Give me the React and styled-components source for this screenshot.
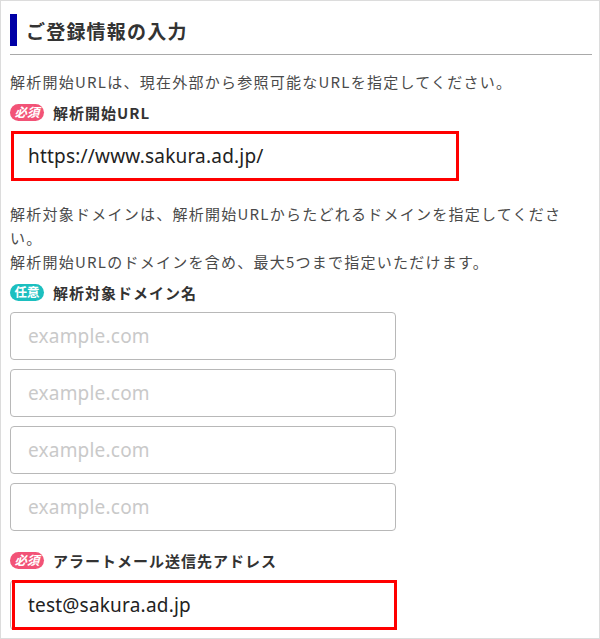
import React from 'react';
import styled, { createGlobalStyle } from 'styled-components';

const GlobalStyle = createGlobalStyle`
  body {
    margin: 0;
    background: #fff;
    font-family: "Noto Sans CJK JP", "Noto Sans", sans-serif;
  }
`

const Frame = styled.div`
  width: 600px;
  height: 639px;
  box-sizing: border-box;
  border: 1px solid #dcdcdc;
  padding: 0 7px 0 9px;
  background: #fff;
  overflow: hidden;
`

const SectionHeading = styled.div`
  display: flex;
  align-items: center;
  gap: 9px;
  padding: 13px 0 8px;
  border-bottom: 1px solid #a9a9a9;
`

const AccentBar = styled.span`
  width: 7px;
  height: 32px;
  background: #0000a6;
`

const HeadingText = styled.h2`
  margin: 0;
  font-size: 19px;
  font-weight: bold;
  color: #333;
  letter-spacing: 1.2px;
`

const Description = styled.p`
  margin: ${p => p.$mt}px 0 0;
  padding-right: 20px;
  font-size: 15px;
  line-height: 24px;
  letter-spacing: 1.25px;
  color: #4a4a4a;
`

const FieldLabel = styled.div`
  display: flex;
  align-items: center;
  gap: 9px;
  height: 24px;
  margin-top: ${p => p.$mt}px;
  font-size: 15px;
  font-weight: bold;
  letter-spacing: 1px;
  color: #333;
`

const Badge = styled.span`
  display: inline-flex;
  align-items: center;
  justify-content: center;
  width: 34px;
  height: 17px;
  border-radius: 9px;
  background: ${p => (p.$optional ? '#1cbfbf' : '#f25377')};
  color: #fff;
  font-size: 12.5px;
  font-weight: bold;
  letter-spacing: 0;
  line-height: 1;
  font-style: ${p => (p.$optional ? 'normal' : 'italic')};
`

const TextBox = styled.input`
  display: block;
  box-sizing: border-box;
  width: 386px;
  height: ${p => p.$h || 48}px;
  margin: ${p => p.$mt || 0}px 0 0;
  padding: 0 17px;
  border: 1px solid #b8b8b8;
  border-radius: 4px;
  background: #fff;
  font-family: "Noto Sans", "Noto Sans CJK JP", sans-serif;
  font-size: 19px;
  letter-spacing: 0.2px;
  color: #222;
  outline: none;

  &::placeholder {
    color: #c9c9c9;
  }
`

const UrlBox = styled(TextBox)`
  width: 448px;
  height: 50px;
  margin-left: 1px;
  padding: 0 14px;
  border: 3px solid #ff0000;
  border-radius: 0;
`

const DomainList = styled.div`
  display: flex;
  flex-direction: column;
  gap: 9px;
  margin-top: 8px;
`

const HighlightField = styled.div`
  position: relative;
  width: 386px;
  margin-top: 8px;
`

// red annotation box drawn over the email input
const Highlight = styled.span`
  position: absolute;
  top: 0;
  left: 2px;
  right: -1px;
  bottom: 0;
  border: 3px solid #ff0000;
  pointer-events: none;
`

const domains = [1, 2, 3, 4];

const App = () => {
  return (
    <>
      <GlobalStyle />
      <Frame>
        <SectionHeading>
          <AccentBar />
          <HeadingText>ご登録情報の入力</HeadingText>
        </SectionHeading>

        <Description $mt={15}>
          解析開始URLは、現在外部から参照可能なURLを指定してください。
        </Description>
        <FieldLabel $mt={6}>
          <Badge>必須</Badge>解析開始URL
        </FieldLabel>
        <UrlBox $mt={7} defaultValue="https://www.sakura.ad.jp/" readOnly />

        <Description $mt={21}>
          解析対象ドメインは、解析開始URLからたどれるドメインを指定してください。
          <br />
          解析開始URLのドメインを含め、最大5つまで指定いただけます。
        </Description>
        <FieldLabel $mt={6}>
          <Badge $optional>任意</Badge>解析対象ドメイン名
        </FieldLabel>
        <DomainList>
          {domains.map(n => (
            <TextBox key={n} placeholder="example.com" />
          ))}
        </DomainList>

        <FieldLabel $mt={17}>
          <Badge>必須</Badge>アラートメール送信先アドレス
        </FieldLabel>
        <HighlightField>
          <TextBox $h={50} defaultValue="test@sakura.ad.jp" readOnly />
          <Highlight />
        </HighlightField>
      </Frame>
    </>
  )
}

export default App;
